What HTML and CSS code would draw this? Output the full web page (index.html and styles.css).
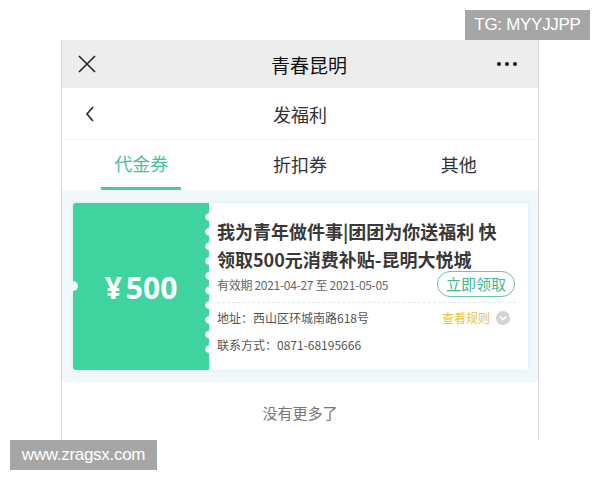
FILE: index.html
```html
<!DOCTYPE html>
<html lang="zh-CN">
<head>
<meta charset="utf-8">
<link rel="stylesheet" href="styles.css">
</head>
<body>
<div class="phone">
  <div class="topbar">
    <svg class="icon-close" width="20" height="20" viewBox="0 0 20 20"><path d="M2 2L18 18M18 2L2 18" stroke="#222" stroke-width="1.6" fill="none"/></svg>
    <div class="topbar-title">青春昆明</div>
    <div class="dots"><span></span><span></span><span></span></div>
  </div>
  <div class="nav">
    <svg class="icon-back" width="12" height="18" viewBox="0 0 12 18"><path d="M9 2L3 9L9 16" stroke="#333" stroke-width="1.8" fill="none"/></svg>
    <div class="nav-title">发福利</div>
  </div>
  <div class="tabs">
    <div class="tab active">代金券</div>
    <div class="tab">折扣券</div>
    <div class="tab">其他</div>
  </div>
  <div class="list">
    <div class="coupon">
      <div class="coupon-left"><span class="yen">¥</span>500</div>
      <div class="coupon-right">
        <div class="coupon-title">我为青年做件事|团团为你送福利 快领取500元消费补贴-昆明大悦城</div>
        <div class="row row-date">
          <span class="date">有效期 2021-04-27 至 2021-05-05</span>
          <span class="btn">立即领取</span>
        </div>
        <div class="divider"></div>
        <div class="row">
          <span class="info">地址：西山区环城南路618号</span>
          <span class="rule">查看规则
            <svg class="rule-icon" width="14" height="14" viewBox="0 0 14 14"><circle cx="7" cy="7" r="7" fill="#d4d4d4"/><path d="M4 5.6L7 8.6L10 5.6" stroke="#fff" stroke-width="1.6" fill="none"/></svg>
          </span>
        </div>
        <div class="row">
          <span class="info">联系方式：0871-68195666</span>
        </div>
      </div>
    </div>
  </div>
  <div class="footer">没有更多了</div>
</div>
<div class="wm wm-top">TG: MYYJJPP</div>
<div class="wm wm-bottom">www.zragsx.com</div>
</body>
</html>
```
FILE: styles.css
```css
* { box-sizing: border-box; }
html, body { margin: 0; padding: 0; background: #fff; }
body {
  width: 600px;
  height: 480px;
  position: relative;
  overflow: hidden;
  font-family: "Noto Sans CJK SC", "Noto Sans", sans-serif;
  color: #222;
}
.phone {
  margin: 40px 0 0 61px;
  width: 478px;
  height: 400px;
  border-left: 1px solid #dcdcdc;
  border-right: 1px solid #dcdcdc;
}
.topbar {
  height: 48px;
  background: #ededed;
  display: flex;
  align-items: center;
  justify-content: space-between;
  padding: 0 21px 0 15px;
}
.icon-close { display: block; }
.topbar-title {
  font-size: 19px;
  font-weight: 400;
  color: #111;
  margin-left: 24px;
}
.dots { display: flex; gap: 4px; }
.dots span { width: 4px; height: 4px; border-radius: 50%; background: #111; }
.nav {
  height: 52px;
  display: flex;
  align-items: center;
  position: relative;
  justify-content: center;
  border-bottom: 1px solid #f4f4f4;
}
.icon-back { position: absolute; left: 22px; top: 17px; }
.nav-title { font-size: 18px; color: #333; }
.tabs {
  height: 50px;
  display: grid;
  grid-template-columns: 1fr 1fr 1fr;
  align-items: center;
}
.tab {
  font-size: 18px;
  color: #333;
  text-align: center;
  height: 50px;
  line-height: 48px;
  justify-self: center;
  width: 80px;
}
.tab.active {
  color: #49c199;
  border-bottom: 3px solid #4dc8a0;
  line-height: 46px;
}
.list {
  background: #f0f8fa;
  padding: 13px 10px 12px 11px;
}
.coupon {
  display: flex;
  height: 167px;
  box-shadow: 0 0 3px rgba(200, 225, 230, 0.6);
}
.coupon-left {
  width: 136px;
  background: #3fd39f;
  border-radius: 3px 0 0 3px;
  color: #fff;
  font-family: "Noto Sans", sans-serif;
  font-weight: 700;
  font-size: 30px;
  display: flex;
  align-items: center;
  justify-content: center;
  position: relative;
  padding-top: 1px;
}
.yen { margin-right: 4px; }
.coupon-left::before {
  content: "";
  position: absolute;
  left: -5px;
  top: 78px;
  width: 10px;
  height: 10px;
  border-radius: 50%;
  background: #f0f8fa;
}
.coupon-right {
  flex: 1;
  background: #fff;
  padding: 14px 12px 0 8px;
  position: relative;
}
.coupon-right::before {
  content: "";
  position: absolute;
  left: -4px;
  top: 10px;
  bottom: 10px;
  width: 8px;
  background: radial-gradient(circle at 4px 4px, #fff 3.4px, transparent 4px) 0 0 / 8px 14.7px repeat-y;
}
.coupon-title {
  font-size: 18px;
  font-weight: 700;
  color: #383838;
  line-height: 28px;
  width: 295px;
}
.row {
  display: flex;
  align-items: center;
  justify-content: space-between;
  font-size: 12px;
  color: #555;
  height: 27px;
}
.row-date { margin-top: -2px; }
.date { color: #666; letter-spacing: -0.3px; }
.btn {
  border: 1.5px solid #6cc5a6;
  border-radius: 13px;
  color: #43b78f;
  font-size: 15px;
  padding: 0 8px;
  height: 26px;
  line-height: 23px;
  margin-top: -1px;
  margin-right: 1px;
}
.divider {
  border-top: 1px dashed #e6e6e6;
  margin: 4px 0 1px;
}
.rule {
  color: #e8c43d;
  font-size: 12px;
  display: flex;
  align-items: center;
  gap: 6px;
  margin-right: 6px;
}
.rule-icon { display: block; }
.footer {
  text-align: center;
  font-size: 15px;
  color: #777;
  padding-top: 20px;
}
.wm {
  position: absolute;
  background: #a6a6a6;
  color: #fff;
  font-family: "Liberation Sans", Arial, sans-serif;
  height: 30px;
  line-height: 30px;
  padding: 0 8px;
  text-align: center;
  font-size: 17px;
  letter-spacing: -0.3px;
}
.wm-top { right: 10px; top: 10px; width: 125px; }
.wm-bottom { left: 10px; top: 440px; width: 147px; }
```
